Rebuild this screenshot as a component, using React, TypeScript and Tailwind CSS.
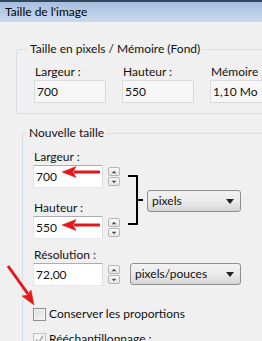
const Spin = () => (
  <div className="flex flex-col gap-[1px] ml-[5px] mt-[2px]">
    {["M3 6.5 6 3.5 9 6.5Z", "M3 3.5 6 6.5 9 3.5Z"].map((d) => (
      <div
        key={d}
        className="w-[12px] h-[9px] border border-[#b4b4b4] rounded-[2px] bg-gradient-to-b from-[#fafafa] to-[#e6e6e6] flex items-center justify-center"
      >
        <svg width="10" height="8" viewBox="0 0 12 10">
          <path d={d} fill="#4d4d4d" />
        </svg>
      </div>
    ))}
  </div>
);

const Field = ({ value }: { value: string }) => (
  <div className="w-[70px] h-[23px] bg-white border border-[#abadb3] border-b-[#e3e9ef] border-l-[#e2e3ea] border-r-[#dbdfe6] pl-[2px] flex items-center">
    {value}
  </div>
);

const Select = ({ label, width }: { label: string; width: string }) => (
  <div
    className={`${width} h-[22px] rounded-[3px] border border-[#8e8f8f] bg-gradient-to-b from-[#f2f2f2] via-[#ebebeb] to-[#d6d6d6] flex items-center justify-between pl-[4px] pr-[6px]`}
  >
    <span>{label}</span>
    <svg width="8" height="5" viewBox="0 0 8 5">
      <path d="M0 0h8L4 5Z" fill="#222" />
    </svg>
  </div>
);

const ReadOnly = ({ label, value }: { label: string; value: string }) => (
  <div className="flex flex-col">
    <span className="leading-[16px] pl-[1px]">{label}</span>
    <div className="w-[72px] h-[23px] bg-[#f6f6f6] border border-[#dadada] pl-[2px] flex items-center">
      {value}
    </div>
  </div>
);

export default function App() {
  return (
    <div className="relative w-[262px] h-[341px] overflow-hidden bg-[#f0f0f0] text-[12px] leading-[16px] text-[#111] font-['Segoe_UI','Lato',sans-serif]">
      {/* Title bar */}
      <div className="h-[22px] border-t-2 border-[#31475c] bg-gradient-to-b from-[#a7bfe0] to-[#cad8ec] pl-[5px] flex items-center text-black">
        Taille de l'image
      </div>

      <div className="pl-[16px] pt-[19px]">
        {/* Taille en pixels */}
        <fieldset className="w-[300px] border border-[#d5dfe5] rounded-[3px] px-[10px] pt-[7px] pb-[10px]">
          <legend className="px-[3px] leading-[16px]">Taille en pixels / Mémoire (Fond)</legend>
          <div className="flex gap-[16px] ml-[7px]">
            <ReadOnly label="Largeur :" value="700" />
            <ReadOnly label="Hauteur :" value="550" />
            <ReadOnly label="Mémoire :" value="1,10 Mo" />
          </div>
        </fieldset>

        {/* Nouvelle taille */}
        <fieldset className="w-[300px] mt-[11px] ml-[6px] border border-[#d5dfe5] rounded-[3px] px-[3px] pt-[8px] pb-[10px]">
          <legend className="px-[3px] leading-[16px]">Nouvelle taille</legend>
          <div className="ml-[7px] flex flex-col">
            <div className="flex items-start">
              <div className="flex flex-col">
                <span className="pl-[1px]">Largeur :</span>
                <div className="flex">
                  <Field value="700" />
                  <Spin />
                </div>
                <span className="pl-[1px] mt-[12px]">Hauteur :</span>
                <div className="flex">
                  <Field value="550" />
                  <Spin />
                </div>
              </div>
              <div className="flex items-center mt-[26px] ml-[8px]">
                <div className="w-[10px] h-[50px] border-2 border-l-0 border-black" />
                <div className="w-[5px] h-[2px] bg-black" />
              </div>
              <div className="mt-[41px] ml-[4px]">
                <Select label="pixels" width="w-[94px]" />
              </div>
            </div>

            <span className="pl-[1px] mt-[8px]">Résolution :</span>
            <div className="flex items-start">
              <Field value="72,00" />
              <Spin />
              <div className="ml-[10px]">
                <Select label="pixels/pouces" width="w-[111px]" />
              </div>
            </div>

            <label className="flex items-center gap-[3px] mt-[20px]">
              <span className="w-[13px] h-[13px] border border-[#8f8f8f] bg-gradient-to-br from-[#dcdcdc] to-[#f6f6f6] shadow-[inset_0_0_0_1px_#f4f4f4]" />
              Conserver les proportions
            </label>
            <label className="flex items-center gap-[3px] mt-[9px]">
              <span className="w-[13px] h-[13px] border border-[#c2c2c2] bg-[#f4f4f4] flex items-center justify-center">
                <svg width="9" height="9" viewBox="0 0 9 9">
                  <path d="M1 4.5 3.5 7.5 8 1" fill="none" stroke="#a8a8a8" strokeWidth="1.4" />
                </svg>
              </span>
              Rééchantillonnage :
            </label>
          </div>
        </fieldset>
      </div>

      {/* Red annotation arrows */}
      <svg className="absolute inset-0 pointer-events-none" width="262" height="341">
        <g fill="#e3161b" stroke="#e3161b">
          <line x1="100" y1="172" x2="74" y2="172" strokeWidth="3" />
          <path d="M62 172 76 166.5 73 172 76 177.5Z" strokeWidth="0.5" />
          <line x1="100" y1="225" x2="74" y2="225" strokeWidth="3" />
          <path d="M62 225 76 219.5 73 225 76 230.5Z" strokeWidth="0.5" />
          <line x1="8" y1="266" x2="28" y2="294" strokeWidth="3" />
          <path d="M34 305 22 296 27.5 295 31 290Z" strokeWidth="0.5" />
        </g>
      </svg>
    </div>
  );
}
